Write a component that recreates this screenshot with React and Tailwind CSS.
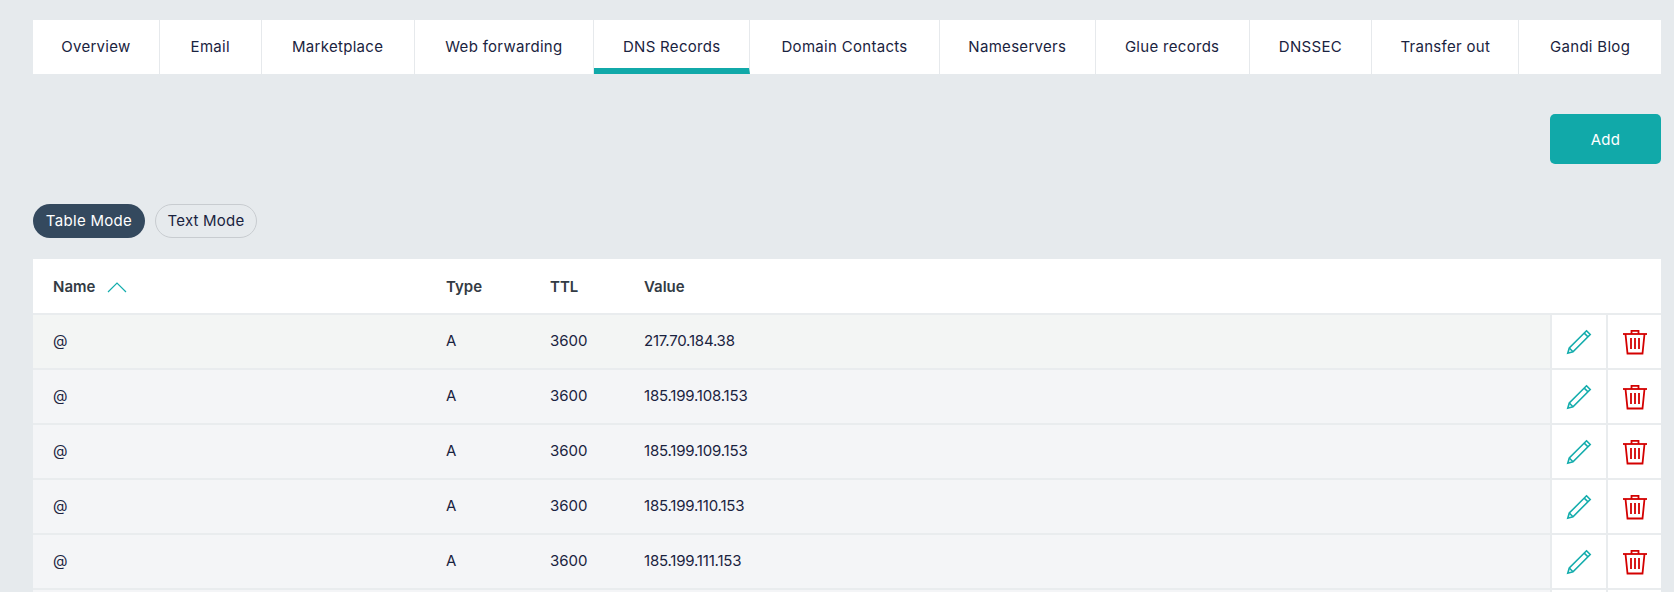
import React from "react";

const tabs = [
  { label: "Overview", width: "w-[127px]" },
  { label: "Email", width: "w-[102px]" },
  { label: "Marketplace", width: "w-[153px]" },
  { label: "Web forwarding", width: "w-[180px]" },
  { label: "DNS Records", width: "w-[156px]", active: true },
  { label: "Domain Contacts", width: "w-[190px]" },
  { label: "Nameservers", width: "w-[156px]" },
  { label: "Glue records", width: "w-[154px]" },
  { label: "DNSSEC", width: "w-[123px]" },
  { label: "Transfer out", width: "w-[147px]" },
  { label: "Gandi Blog", width: "w-[142px]" },
];

const records = [
  { ip: "217.70.184.38", first: true },
  { ip: "185.199.108.153" },
  { ip: "185.199.109.153" },
  { ip: "185.199.110.153" },
  { ip: "185.199.111.153" },
];

function PencilIcon() {
  return (
    <svg width="26" height="26" viewBox="0 0 26 26" fill="none" stroke="#14adad" strokeWidth="1.6">
      <path d="M20.5 1.8 L24.2 5.5 L7 22.7 L1.8 24.2 L3.3 19 Z" />
      <path d="M18.2 4.1 L21.9 7.8" />
      <path d="M3.3 19 L7 22.7" />
    </svg>
  );
}

function TrashIcon() {
  return (
    <svg width="26" height="26" viewBox="0 0 26 26" fill="none" stroke="#d40000" strokeWidth="1.8">
      <path d="M1 5 H25" />
      <path d="M9.5 5 V1.8 H16.5 V5" />
      <path d="M3.5 5 L5.5 24.5 H20.5 L22.5 5" />
      <path d="M9 9 V20 M13 9 V20 M17 9 V20" />
    </svg>
  );
}

function App() {
  return (
    <div className="h-[592px] overflow-hidden bg-[#e6eaed] pt-5 pl-[33px] pr-[13px] font-['Inter',sans-serif] text-[#1a2340]">
      <div className="flex h-[54px] w-[1628px] bg-white">
        {tabs.map((tab, index) => (
          <div
            key={tab.label}
            className={`flex items-center justify-center text-[15px] tracking-[0.3px] ${tab.width} ${
              index < tabs.length - 1 ? "border-r border-[#e6e9ec]" : ""
            } ${tab.active ? "border-b-[6px] border-b-[#11a9a9] pt-[7px]" : "pt-px"}`}
          >
            {tab.label}
          </div>
        ))}
      </div>

      <div className="mt-10 flex justify-end">
        <button className="h-[50px] w-[111px] rounded-[5px] bg-[#11a9a9] pt-[3px] text-[15px] tracking-[0.3px] text-white">
          Add
        </button>
      </div>

      <div className="mt-10 flex gap-[10px]">
        <div className="flex h-[34px] w-[112px] items-center justify-center rounded-full bg-[#34495e] text-[15px] tracking-[0.3px] text-white">
          Table Mode
        </div>
        <div className="flex h-[34px] w-[102px] items-center justify-center rounded-full border border-[#c8ccd0] text-[15px] tracking-[0.2px]">
          Text Mode
        </div>
      </div>

      <table className="mt-[21px] w-[1628px] table-fixed border-collapse bg-white text-[15px]">
        <colgroup>
          <col className="w-[393px]" />
          <col className="w-[104px]" />
          <col className="w-[94px]" />
          <col />
          <col className="w-[56px]" />
          <col className="w-[54px]" />
        </colgroup>
        <thead>
          <tr className="h-[55px] border-b-2 border-[#e9ecee] text-left text-[#333b44]">
            <th className="pl-5 pt-[2px] font-semibold">
              <span className="flex items-center gap-3">
                Name
                <svg width="20" height="12" viewBox="0 0 20 12" fill="none" stroke="#14adad" strokeWidth="1.2">
                  <path d="M1 11 L10 2 L19 11" />
                </svg>
              </span>
            </th>
            <th className="pl-[20px] pt-[2px] font-semibold">Type</th>
            <th className="pl-[20px] pt-[2px] font-semibold">TTL</th>
            <th className="pl-[20px] pt-[2px] font-semibold">Value</th>
            <th />
            <th />
          </tr>
        </thead>
        <tbody>
          {records.map((record, index) => (
            <tr
              key={index}
              className={`h-[55px] border-b-2 border-[#e9ecee] ${record.first ? "bg-[#f3f5f4]" : "bg-[#f4f5f7]"}`}
            >
              <td className="pl-5">@</td>
              <td className="pl-[20px]">A</td>
              <td className="pl-[20px]">3600</td>
              <td className="pl-[20px] tracking-[-0.2px]">{record.ip}</td>
              <td className="border-l-2 border-[#e9ecee] bg-white">
                <div className="flex justify-center">
                  <PencilIcon />
                </div>
              </td>
              <td className="border-l-2 border-[#e9ecee] bg-white">
                <div className="flex justify-center">
                  <TrashIcon />
                </div>
              </td>
            </tr>
          ))}
          <tr className="h-[55px] bg-[#f4f5f7]">
            <td colSpan={4} />
            <td className="border-l-2 border-[#e9ecee] bg-white" />
            <td className="border-l-2 border-[#e9ecee] bg-white" />
          </tr>
        </tbody>
      </table>
    </div>
  );
}

export default App;
